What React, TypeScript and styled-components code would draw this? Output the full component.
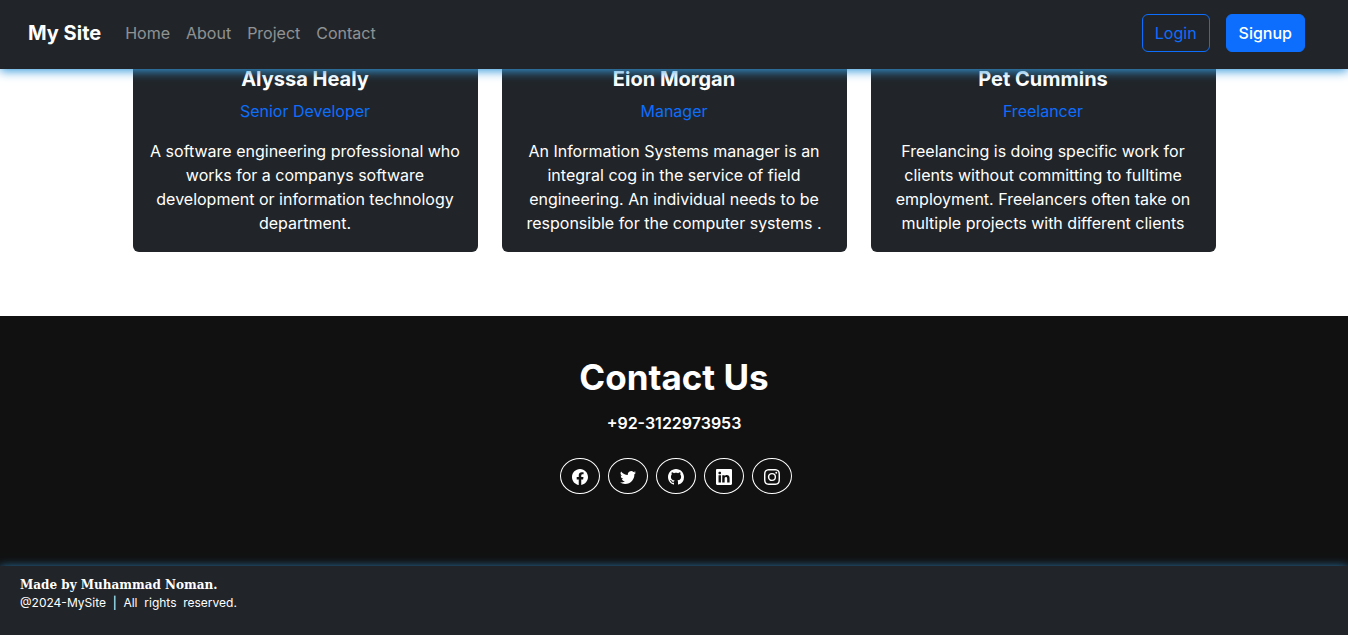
import React from "react";
import styled, { createGlobalStyle, css } from "styled-components";
import { BsFacebook, BsGithub, BsInstagram, BsLinkedin, BsTwitter } from "react-icons/bs";

const GlobalStyle = createGlobalStyle`
  *, *::before, *::after { box-sizing: border-box; }
  body {
    margin: 0;
    background: #fff;
    color: #fff;
    font-family: Inter, "Liberation Sans", sans-serif;
    font-size: 16px;
    line-height: 24px;
  }
  h1, h2, h3, p, ul { margin: 0; padding: 0; }
`;

const Navbar = styled.header`
  position: sticky;
  top: 0;
  z-index: 10;
  display: flex;
  align-items: center;
  padding: 14px 43px 17px 28px;
  background: #212529;
  box-shadow: 0 2px 10px #3498db;
`;

const Brand = styled.a`
  margin-right: 16px;
  color: #fff;
  font-size: 20px;
  font-weight: 700;
  line-height: 30px;
  text-decoration: none;
`;

const NavList = styled.nav`
  display: flex;
  flex: 1;
`;

const NavLink = styled.a`
  padding: 7px 8px;
  color: rgba(255, 255, 255, 0.5);
  text-decoration: none;
`;

const Actions = styled.div`
  display: flex;
  gap: 16px;
`;

const Button = styled.button<{ $filled?: boolean }>`
  padding: 6px 12px;
  border: 1px solid #0d6efd;
  border-radius: 6px;
  background: transparent;
  color: #0d6efd;
  font: inherit;
  cursor: pointer;
  ${({ $filled }) =>
    $filled &&
    css`
      background: #0d6efd;
      color: #fff;
      font-weight: 500;
    `}
`;

const Team = styled.section`
  display: grid;
  grid-template-columns: repeat(3, 1fr);
  gap: 24px;
  max-width: 1083px;
  margin: -18px auto 0;
  padding-bottom: 64px;
`;

const Card = styled.article`
  padding: 16px 16px 17px;
  border-radius: 0 0 6px 6px;
  background: #212529;
  text-align: center;
`;

const Name = styled.h3`
  margin-bottom: 8px;
  font-size: 20px;
  font-weight: 700;
  line-height: 24px;
`;

const Role = styled.p`
  margin-bottom: 16px;
  color: #0d6efd;
`;

const Contact = styled.section`
  display: flex;
  flex-direction: column;
  align-items: center;
  padding: 39px 16px 72px;
  background: #111;
`;

const ContactTitle = styled.h2`
  font-size: 35px;
  font-weight: 700;
  line-height: 44px;
`;

const Phone = styled.p`
  margin: 12px 0 23px;
  font-weight: 600;
`;

const Socials = styled.div`
  display: flex;
  gap: 8px;
  padding-left: 4px;
`;

const SocialLink = styled.a`
  display: flex;
  align-items: center;
  justify-content: center;
  width: 40px;
  height: 36px;
  padding-top: 2px;
  border: 1px solid #fff;
  border-radius: 50%;
  color: #fff;
`;

const Footer = styled.footer`
  position: relative;
  padding: 11px 20px 24px;
  background: #212529;
  box-shadow: 0 2px 10px #3498db;
`;

const Credit = styled.p`
  font-family: "DejaVu Serif", serif;
  font-size: 12px;
  font-weight: 700;
  line-height: 17px;
`;

const Copyright = styled.p`
  font-size: 12px;
  line-height: 17px;
  white-space: pre;
`;

const links = ["Home", "About", "Project", "Contact"];

const members = [
  {
    name: "Alyssa Healy",
    role: "Senior Developer",
    bio: "A software engineering professional who works for a companys software development or information technology department.",
  },
  {
    name: "Eion Morgan",
    role: "Manager",
    bio: "An Information Systems manager is an integral cog in the service of field engineering. An individual needs to be responsible for the computer systems .",
  },
  {
    name: "Pet Cummins",
    role: "Freelancer",
    bio: "Freelancing is doing specific work for clients without committing to fulltime employment. Freelancers often take on multiple projects with different clients",
  },
];

const socials = [
  { label: "Facebook", Icon: BsFacebook },
  { label: "Twitter", Icon: BsTwitter },
  { label: "GitHub", Icon: BsGithub },
  { label: "LinkedIn", Icon: BsLinkedin },
  { label: "Instagram", Icon: BsInstagram },
];

export default function App() {
  return (
    <>
      <GlobalStyle />
      <Navbar>
        <Brand href="#home">My Site</Brand>
        <NavList>
          {links.map((link) => (
            <NavLink key={link} href={`#${link.toLowerCase()}`}>
              {link}
            </NavLink>
          ))}
        </NavList>
        <Actions>
          <Button type="button">Login</Button>
          <Button type="button" $filled>
            Signup
          </Button>
        </Actions>
      </Navbar>
      <main>
        <Team>
          {members.map(({ name, role, bio }) => (
            <Card key={name}>
              <Name>{name}</Name>
              <Role>{role}</Role>
              <p>{bio}</p>
            </Card>
          ))}
        </Team>
        <Contact id="contact">
          <ContactTitle>Contact Us</ContactTitle>
          <Phone>+92-3122973953</Phone>
          <Socials>
            {socials.map(({ label, Icon }) => (
              <SocialLink key={label} href={`#${label.toLowerCase()}`} aria-label={label}>
                <Icon size={16} />
              </SocialLink>
            ))}
          </Socials>
        </Contact>
      </main>
      <Footer>
        <Credit>Made by Muhammad Noman.</Credit>
        <Copyright>{"@2024-MySite  |  All  rights  reserved."}</Copyright>
      </Footer>
    </>
  );
}
